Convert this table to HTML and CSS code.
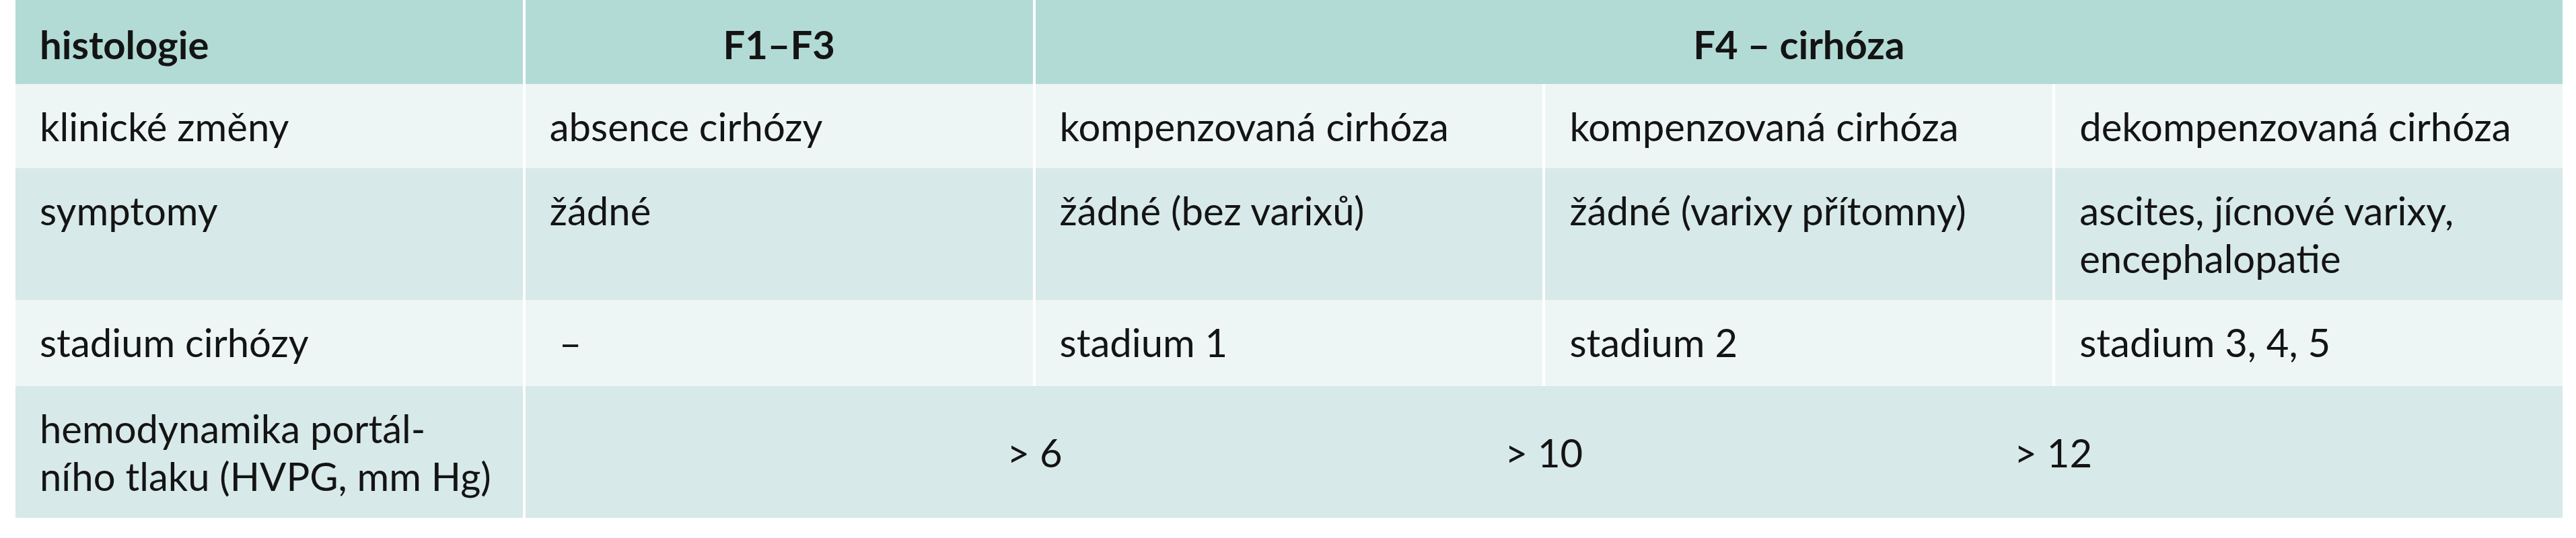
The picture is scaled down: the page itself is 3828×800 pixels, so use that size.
FILE: index.html
```html
<!DOCTYPE html>
<html lang="cs">
<head>
<meta charset="utf-8">
<title>Histologie a klinické stadium cirhózy</title>
<link rel="stylesheet" href="styles.css">
</head>
<body>
<div class="table" role="table">
  <div class="cell head" role="columnheader">histologie</div>
  <div class="cell head center" role="columnheader">F1–F3</div>
  <div class="cell head center span3" role="columnheader">F4 – cirhóza</div>

  <div class="cell light">klinické změny</div>
  <div class="cell light">absence cirhózy</div>
  <div class="cell light">kompenzovaná cirhóza</div>
  <div class="cell light">kompenzovaná cirhóza</div>
  <div class="cell light">dekompenzovaná cirhóza</div>

  <div class="cell dark">symptomy</div>
  <div class="cell dark">žádné</div>
  <div class="cell dark">žádné (bez varixů)</div>
  <div class="cell dark">žádné (varixy přítomny)</div>
  <div class="cell dark">ascites, jícnové varixy,<br>encephalopatie</div>

  <div class="cell light tall">stadium cirhózy</div>
  <div class="cell light tall"><span class="dash">–</span></div>
  <div class="cell light tall">stadium 1</div>
  <div class="cell light tall">stadium 2</div>
  <div class="cell light tall">stadium 3, 4, 5</div>

  <div class="cell dark">hemodynamika portál-<br>ního tlaku (HVPG, mm Hg)</div>
  <div class="cell dark span4">
    <div class="thresholds">
      <span>&gt; 6</span>
      <span>&gt; 10</span>
      <span>&gt; 12</span>
    </div>
  </div>
</div>
</body>
</html>
```

FILE: styles.css
```css
html, body {
  margin: 0;
  padding: 0;
  background: #ffffff;
}

body {
  font-family: Lato, "Open Sans", "Liberation Sans", sans-serif;
  color: #141414;
}

.table {
  display: grid;
  grid-template-columns: repeat(5, 1fr);
  column-gap: 4px;
  row-gap: 0;
  width: 3785px;
  margin-left: 23px;
  font-size: 58px;
  line-height: 71px;
}

.cell {
  padding: 27px 36px 27px 36px;
}

.tall {
  padding-bottom: 30px;
}

.head {
  background: #b3dbd6;
  font-weight: 700;
  padding-top: 30px;
  padding-bottom: 24px;
}

.center {
  text-align: center;
}

.span3 {
  grid-column: 3 / 6;
}

.span4 {
  grid-column: 2 / 6;
  padding-left: 0;
  padding-right: 0;
  display: flex;
  align-items: center;
}

.light {
  background: #edf6f5;
}

.dark {
  background: #d7e9e8;
}

.dash {
  padding-left: 14px;
}

.thresholds {
  flex: 1;
  display: grid;
  grid-template-columns: repeat(3, 1fr);
  padding: 0 12.5%;
  text-align: center;
}
```
